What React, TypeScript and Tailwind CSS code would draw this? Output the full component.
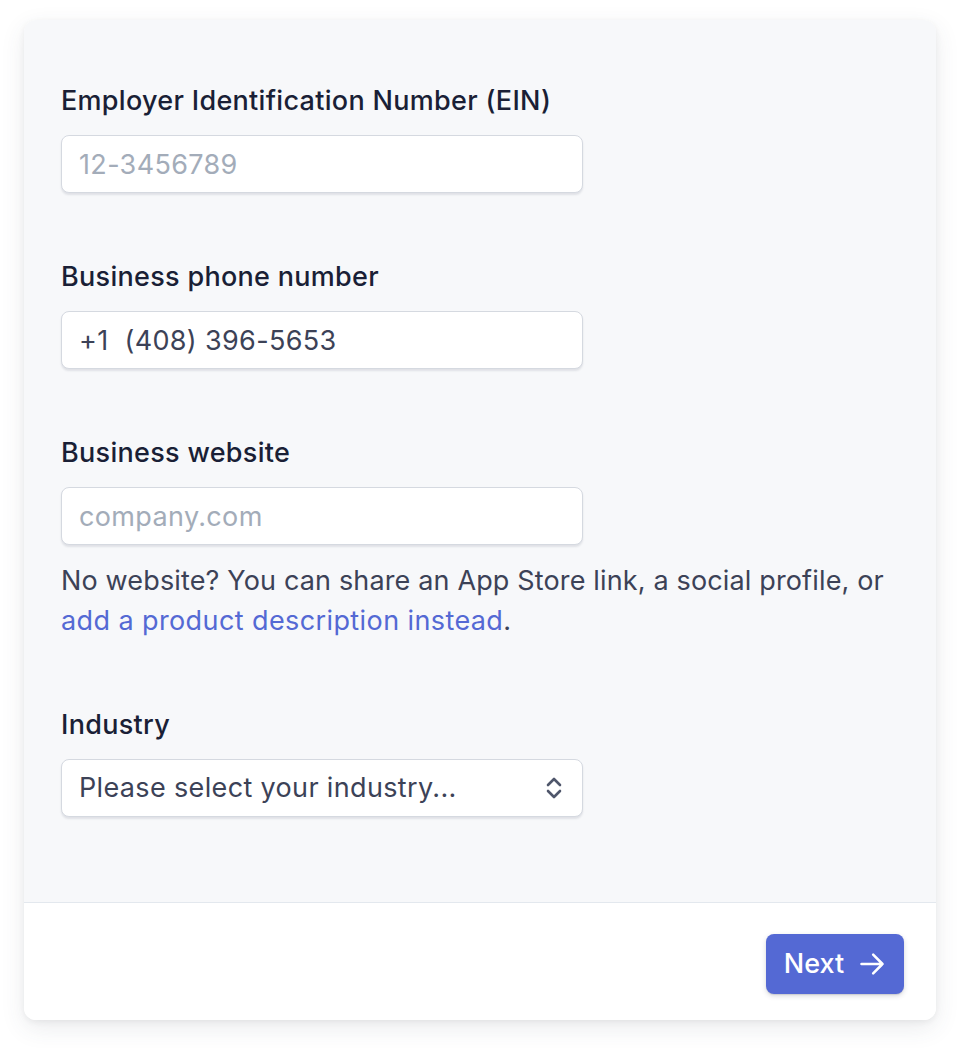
import React from 'react';

function Field({ label, children }: { label: string; children: React.ReactNode }) {
    return (
        <div>
            <label className="block text-[27px] leading-[36px] tracking-[0.3px] font-medium text-[#1a1f36] mb-4">{label}</label>
            {children}
        </div>
    );
}

const inputClass =
    'block w-[522px] h-[58px] rounded-[8px] bg-white px-[17px] text-[27px] tracking-[0.35px] text-[#3c4257] border border-[#d5d9e0] shadow-[0_2px_2px_rgba(60,66,87,0.12)] outline-none placeholder:text-[#a3acb9]';

export default function App() {
    return (
        <div className="min-h-screen bg-white pt-5 px-6" style={{ fontFamily: 'Inter, "Noto Sans", sans-serif' }}>
            <div className="w-[912px] h-[1000px] rounded-[12px] bg-white overflow-hidden flex flex-col shadow-[0_8px_24px_rgba(60,66,87,0.10),0_2px_6px_rgba(0,0,0,0.06)]">
                {/* Form body */}
                <div className="flex-1 bg-[#f7f8fa] px-[37px] pt-[63px] flex flex-col gap-[66px]">
                    <Field label="Employer Identification Number (EIN)">
                        <input className={inputClass} placeholder="12-3456789" />
                    </Field>

                    <Field label="Business phone number">
                        <input className={inputClass} defaultValue="+1  (408) 396-5653" />
                    </Field>

                    <div>
                        <Field label="Business website">
                            <input className={inputClass} placeholder="company.com" />
                        </Field>
                        <p className="mt-4 text-[27px] leading-[40px] tracking-[0.15px] text-[#3c4257] whitespace-nowrap">
                            No website? You can share an App Store link, a social profile, or
                            <br />
                            <a href="#" className="text-[#5469d4] tracking-[0.4px]">add a product description instead</a>.
                        </p>
                    </div>

                    <Field label="Industry">
                        <div className="relative w-[522px]">
                            <div className={inputClass + ' flex items-center'}>Please select your industry...</div>
                            <svg
                                className="absolute right-[20px] top-[17px] w-[18px] h-[24px] text-[#4f566b]"
                                fill="none"
                                stroke="currentColor"
                                viewBox="0 0 18 24"
                            >
                                <path strokeLinecap="round" strokeLinejoin="round" strokeWidth={2.6} d="M3 9l6-6 6 6M3 15l6 6 6-6" />
                            </svg>
                        </div>
                    </Field>
                </div>

                {/* Footer */}
                <div className="h-[118px] shrink-0 border-t border-[#e3e8ee] bg-white flex justify-end items-start pt-[31px] pr-[32px]">
                    <button className="h-[60px] w-[138px] rounded-[8px] bg-[#5469d4] text-white text-[27px] font-medium flex items-center justify-center gap-[14px] shadow-[0_2px_5px_rgba(60,66,87,0.2),0_1px_1px_rgba(0,0,0,0.1)]">
                        <span>Next</span>
                        <svg className="w-[28px] h-[28px]" fill="none" stroke="currentColor" viewBox="0 0 24 24">
                            <path strokeLinecap="round" strokeLinejoin="round" strokeWidth={2.2} d="M3 12h18m-8-8l8 8-8 8" />
                        </svg>
                    </button>
                </div>
            </div>
        </div>
    );
}
